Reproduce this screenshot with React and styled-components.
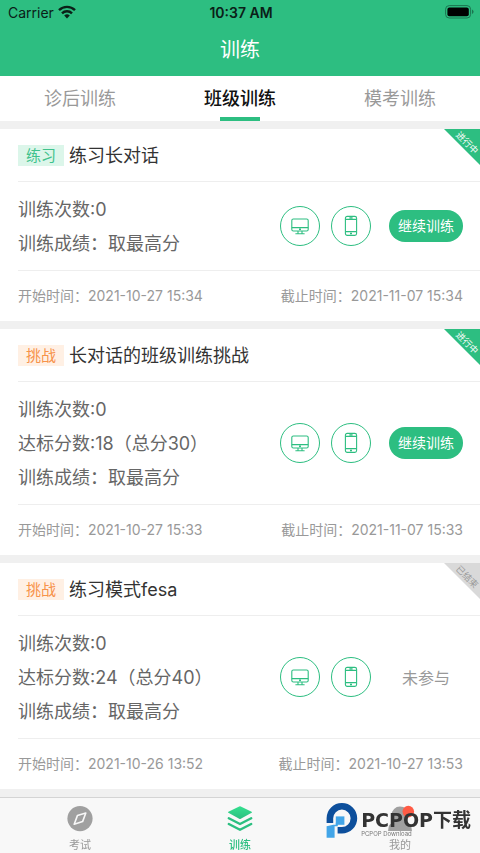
import styled, { createGlobalStyle } from 'styled-components';

const green = '#2dbe81';

const treinos = [
  {
    tag: '练习',
    title: '练习长对话',
    lines: ['训练次数:0', '训练成绩：取最高分'],
    start: '2021-10-27 15:34',
    end: '2021-11-07 15:34',
    active: true,
  },
  {
    tag: '挑战',
    title: '长对话的班级训练挑战',
    lines: ['训练次数:0', '达标分数:18（总分30）', '训练成绩：取最高分'],
    start: '2021-10-27 15:33',
    end: '2021-11-07 15:33',
    active: true,
  },
  {
    tag: '挑战',
    title: '练习模式fesa',
    lines: ['训练次数:0', '达标分数:24（总分40）', '训练成绩：取最高分'],
    start: '2021-10-26 13:52',
    end: '2021-10-27 13:53',
    active: false,
  },
];

const GlobalStyle = createGlobalStyle`
  * {
    box-sizing: border-box;
  }

  body {
    margin: 0;
    background: #f0f0f0;
    font-family: Inter, 'Noto Sans CJK SC', sans-serif;
  }

  button {
    border: 0;
    padding: 0;
    background: none;
    font-family: inherit;
    cursor: pointer;
  }
`;

const Page = styled.div`
  display: flex;
  flex-direction: column;
  min-height: 100vh;
`;

const Header = styled.header`
  padding-bottom: 2px;
  background: ${green};
`;

const StatusBar = styled.div`
  display: grid;
  grid-template-columns: 1fr auto 1fr;
  align-items: center;
  height: 24px;
  padding: 0 6px 0 8px;
  color: #0b2018;
  font-size: 14px;
`;

const Carrier = styled.span`
  display: flex;
  align-items: center;
  gap: 4px;
`;

const Clock = styled.span`
  font-weight: 600;
`;

const Battery = styled.svg`
  justify-self: end;
`;

const Titulo = styled.h1`
  margin: 0;
  padding-top: 2px;
  color: #fff;
  font-size: 20px;
  font-weight: 400;
  line-height: 48px;
  text-align: center;
`;

const Tabs = styled.nav`
  display: grid;
  grid-template-columns: repeat(3, 1fr);
  height: 45px;
  background: #fff;
`;

const Tab = styled.button`
  display: flex;
  flex-direction: column;
  align-items: center;
  justify-content: space-between;
  color: ${({ $active }) => ($active ? '#111' : '#999')};
  font-size: 18px;
  font-weight: ${({ $active }) => ($active ? 500 : 400)};
  line-height: 45px;

  &::after {
    content: '';
    width: 40px;
    height: 4px;
    margin-top: -4px;
    background: ${({ $active }) => ($active ? green : 'transparent')};
  }
`;

const Lista = styled.main`
  display: flex;
  flex: 1;
  flex-direction: column;
  gap: 8px;
  padding: 8px 0;
`;

const Card = styled.article`
  position: relative;
  padding-left: 18px;
  background: #fff;
`;

const CardHeader = styled.div`
  display: flex;
  align-items: center;
  gap: 5px;
  height: 53px;
  border-bottom: 1px solid #eee;
`;

const Tag = styled.span`
  width: 46px;
  background: ${({ $orange }) => ($orange ? '#fff0e4' : '#dcf6ea')};
  color: ${({ $orange }) => ($orange ? '#f7924a' : '#3fc28c')};
  font-size: 15px;
  line-height: 21px;
  text-align: center;
`;

const CardTitle = styled.h2`
  margin: 0;
  color: #333;
  font-size: 18px;
  font-weight: 400;
  line-height: 25px;
`;

const Ribbon = styled.span`
  position: absolute;
  top: 0;
  right: 0;
  width: 36px;
  height: 36px;
  background: ${({ $active }) => ($active ? green : '#d9d9d9')};
  clip-path: polygon(0 0, 100% 0, 100% 100%);
  color: ${({ $active }) => ($active ? '#fff' : '#999')};
  font-size: 9px;
`;

const RibbonText = styled.span`
  position: absolute;
  top: 9px;
  right: -1px;
  width: 28px;
  line-height: 10px;
  text-align: center;
  transform: rotate(45deg);
`;

const CardBody = styled.div`
  display: flex;
  align-items: center;
  justify-content: space-between;
  padding-right: 17px;
  border-bottom: 1px solid #eee;
`;

const Linhas = styled.div`
  padding: 11px 0 9px;
`;

const Linha = styled.p`
  margin: 0;
  color: #666;
  font-size: 18px;
  line-height: 34px;
`;

const Actions = styled.div`
  display: flex;
  align-items: center;
  gap: 11px;
`;

const Device = styled.span`
  display: flex;
  align-items: center;
  justify-content: center;
  width: 40px;
  height: 40px;
  border: 1px solid ${green};
  border-radius: 50%;
`;

const ActionSlot = styled.div`
  width: 74px;
  margin-left: 7px;
  color: #999;
  font-size: 16px;
  text-align: center;
`;

const Continue = styled.button`
  width: 100%;
  border-radius: 16px;
  background: ${green};
  color: #fff;
  font-size: 14px;
  line-height: 32px;
`;

const CardFooter = styled.div`
  display: flex;
  align-items: center;
  justify-content: space-between;
  padding-right: 17px;
  color: #999;
  font-size: 14px;
  line-height: 50px;
`;

const TabBar = styled.nav`
  position: sticky;
  bottom: 0;
  display: grid;
  grid-template-columns: repeat(3, 1fr);
  height: 57px;
  border-top: 1px solid #d4d4d4;
  background: #f8f8f8;
`;

const NavLink = styled.a`
  display: flex;
  flex-direction: column;
  align-items: center;
  gap: 2px;
  padding-top: 7px;
  color: ${({ $active }) => ($active ? green : '#999')};
  font-size: 11px;
  font-weight: ${({ $active }) => ($active ? 500 : 400)};
  line-height: 20px;
  text-decoration: none;
`;

const Brand = styled.div`
  position: absolute;
  top: 5px;
  right: 9px;
  display: flex;
  align-items: center;
  gap: 3px;
  pointer-events: none;
`;

const BrandText = styled.div`
  padding-top: 5px;
  color: #333;
`;

const BrandName = styled.div`
  font-family: 'DejaVu Sans', 'Noto Sans CJK SC', sans-serif;
  font-size: 19px;
  font-weight: 700;
  line-height: 20px;
`;

const BrandSub = styled.div`
  color: #777;
  font-size: 6px;
  line-height: 8px;
`;

function Wifi() {
  return (
    <svg width="18" height="14" viewBox="0 0 18 14" fill="none" stroke="#0b2018" strokeWidth="2.4">
      <path d="M1 5.2a11.4 11.4 0 0 1 16 0" />
      <path d="M4 8.3a7.1 7.1 0 0 1 10 0" />
      <path d="M9 13.4 6.2 10.5a4 4 0 0 1 5.6 0z" fill="#0b2018" stroke="none" />
    </svg>
  );
}

function Monitor() {
  return (
    <svg width="18" height="18" viewBox="0 0 18 18" fill="none" stroke={green} strokeWidth="1.1">
      <rect x="0.8" y="2" width="16.4" height="12" rx="1.6" />
      <path d="M0.8 10.6h16.4M7 14v2.4M11 14v2.4M4.4 16.7h9.2" />
      <circle cx="9" cy="12.3" r="0.5" fill={green} />
    </svg>
  );
}

function Phone() {
  return (
    <svg width="14" height="22" viewBox="0 0 14 22" fill="none" stroke={green} strokeWidth="1.1">
      <rect x="1.4" y="1.4" width="11.2" height="19" rx="1.8" />
      <path d="M1.4 4.4h11.2M1.4 16.6h11.2M5.4 2.9h3.2" />
      <circle cx="7" cy="18.5" r="0.5" fill={green} />
    </svg>
  );
}

function Compass() {
  return (
    <svg width="26" height="28" viewBox="0 0 26 28">
      <circle cx="13" cy="13.6" r="12.6" fill="#a0a0a0" />
      <path d="M18.8 8 10.4 10.6 7.2 19.2 15.6 16.6z" fill="none" stroke="#f8f8f8" strokeWidth="1.6" strokeLinejoin="round" />
    </svg>
  );
}

function Layers() {
  return (
    <svg width="26" height="28" viewBox="0 0 26 28">
      <defs>
        <linearGradient id="layers" x1="0" y1="0" x2="0" y2="1">
          <stop offset="0" stopColor="#35e08f" />
          <stop offset="1" stopColor="#2bbf80" />
        </linearGradient>
      </defs>
      <path d="M12.2 1.4q.8-.4 1.6 0l10.8 5.4q.9.5 0 1l-10.8 5.9q-.8.4-1.6 0L1.4 7.8q-.9-.5 0-1z" fill="url(#layers)" />
      <path d="M1.8 13.2 13 19l11.2-5.8M1.8 19 13 24.8 24.2 19" fill="none" stroke="#2bbf80" strokeWidth="2.4" strokeLinecap="round" strokeLinejoin="round" />
    </svg>
  );
}

function Person() {
  return (
    <svg width="26" height="28" viewBox="0 0 26 28" overflow="visible">
      <circle cx="13" cy="10" r="8.4" fill="#a0a0a0" />
      <path d="M1 26q0-8 8-10h8q8 2 8 10z" fill="#a0a0a0" />
      <circle cx="21.3" cy="6.6" r="5.8" fill="#ff5b45" />
    </svg>
  );
}

function BrandMark() {
  return (
    <svg width="32" height="36" viewBox="0 0 32 36">
      <path d="M3.9 20V15.3A12 12 0 1 1 15.9 27.3H11.6" fill="none" stroke="#0d4f9c" strokeWidth="6.6" />
      <path d="M9.8 13.4h8.6v8.4H9.8z" fill="#42a5e8" />
      <path d="M0.6 23.2 7.4 21.8H9.8v-2h2v3.4H8.6V34.8H.6z" fill="#42a5e8" />
    </svg>
  );
}

function TrainingCard({ treino }) {
  return (
    <Card>
      <CardHeader>
        <Tag $orange={treino.tag === '挑战'}>{treino.tag}</Tag>
        <CardTitle>{treino.title}</CardTitle>
      </CardHeader>
      <Ribbon $active={treino.active}>
        <RibbonText>{treino.active ? '进行中' : '已结束'}</RibbonText>
      </Ribbon>
      <CardBody>
        <Linhas>
          {treino.lines.map((line) => (
            <Linha key={line}>{line}</Linha>
          ))}
        </Linhas>
        <Actions>
          <Device><Monitor /></Device>
          <Device><Phone /></Device>
          <ActionSlot>
            {treino.active ? <Continue type="button">继续训练</Continue> : '未参与'}
          </ActionSlot>
        </Actions>
      </CardBody>
      <CardFooter>
        <span>开始时间：{treino.start}</span>
        <span>截止时间：{treino.end}</span>
      </CardFooter>
    </Card>
  );
}

function App() {
  return (
    <Page>
      <GlobalStyle />
      <Header>
        <StatusBar>
          <Carrier>Carrier <Wifi /></Carrier>
          <Clock>10:37 AM</Clock>
          <Battery width="29" height="14" viewBox="0 0 29 14">
            <rect x="0.6" y="0.6" width="25" height="12.4" rx="3.6" fill="none" stroke="#1b7450" />
            <rect x="2.4" y="2.4" width="21.4" height="8.8" rx="2" fill="#000" />
            <path d="M27 4.6q1.6.7 1.6 2.2T27 9z" fill="#1b7450" />
          </Battery>
        </StatusBar>
        <Titulo>训练</Titulo>
      </Header>
      <Tabs>
        <Tab type="button">诊后训练</Tab>
        <Tab type="button" $active>班级训练</Tab>
        <Tab type="button">模考训练</Tab>
      </Tabs>
      <Lista>
        {treinos.map((treino) => (
          <TrainingCard key={treino.title} treino={treino} />
        ))}
      </Lista>
      <TabBar>
        <NavLink href="#exam"><Compass />考试</NavLink>
        <NavLink href="#training" $active><Layers />训练</NavLink>
        <NavLink href="#me"><Person />我的</NavLink>
        <Brand>
          <BrandMark />
          <BrandText>
            <BrandName>PCPOP下载</BrandName>
            <BrandSub>PCPOP Download</BrandSub>
          </BrandText>
        </Brand>
      </TabBar>
    </Page>
  );
}

export default App;
